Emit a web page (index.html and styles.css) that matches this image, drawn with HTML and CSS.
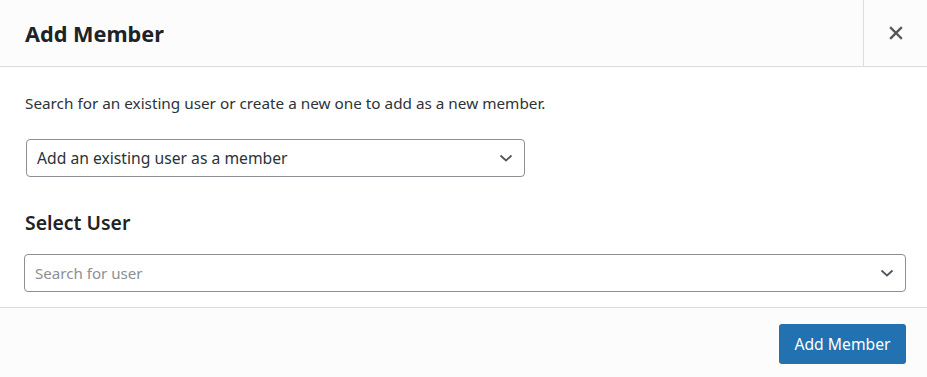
FILE: index.html
```html
<!DOCTYPE html>
<html lang="en">
  <head>
    <meta charset="UTF-8" />
    <meta name="viewport" content="width=device-width, initial-scale=1.0" />
    <title>Add Member</title>
    <link rel="stylesheet" href="styles.css">
  </head>
  <body>
    <div class="modal">
      <div class="modal-header">
        <h1>Add Member</h1>
        <button class="close-btn" type="button" aria-label="Close">
          <svg width="14" height="14" viewBox="0 0 14 14">
            <path d="M2 2L12 12M12 2L2 12" stroke="#50575e" stroke-width="2.4" stroke-linecap="square" />
          </svg>
        </button>
      </div>

      <div class="modal-body">
        <p class="intro">Search for an existing user or create a new one to add as a new member.</p>

        <div class="select-box mode-select">
          <span class="select-text">Add an existing user as a member</span>
          <svg class="chevron" width="14" height="8" viewBox="0 0 14 8">
            <path d="M1.5 1.5L7 6.5L12.5 1.5" fill="none" stroke="#50575e" stroke-width="1.8" />
          </svg>
        </div>

        <h2>Select User</h2>

        <div class="select-box user-select">
          <span class="placeholder">Search for user</span>
          <svg class="chevron" width="14" height="8" viewBox="0 0 14 8">
            <path d="M1.5 1.5L7 6.5L12.5 1.5" fill="none" stroke="#50575e" stroke-width="1.8" />
          </svg>
        </div>
      </div>

      <div class="modal-footer">
        <button class="btn" type="button">Add Member</button>
      </div>
    </div>
  </body>
</html>
```

FILE: styles.css
```css
* {
  margin: 0;
  padding: 0;
  box-sizing: border-box;
}

body {
  font-family: "Noto Sans", Arial, sans-serif;
  background-color: #ffffff;
  color: #1d2327;
}

.modal {
  width: 927px;
  height: 377px;
  display: flex;
  flex-direction: column;
}

.modal-header {
  height: 67px;
  flex-shrink: 0;
  background-color: #fcfcfc;
  border-bottom: 1px solid #dcdcde;
  display: flex;
  align-items: center;
  justify-content: space-between;
}

h1 {
  font-size: 21.7px;
  font-weight: 700;
  padding-left: 25px;
  color: #1d2327;
}

.close-btn {
  width: 64px;
  height: 100%;
  border: none;
  border-left: 1px solid #dcdcde;
  background: transparent;
  display: flex;
  align-items: center;
  justify-content: center;
}

.modal-body {
  padding: 26px 21px 15px 24px;
  flex: 1;
}

.intro {
  font-size: 15.3px;
  color: #2c3338;
  padding-left: 1px;
  line-height: 20px;
}

.select-box {
  height: 38px;
  border: 1px solid #8c8f94;
  border-radius: 4px;
  display: flex;
  align-items: center;
  justify-content: space-between;
  background: #ffffff;
}

.mode-select {
  width: 499px;
  margin-left: 2px;
  margin-top: 26px;
  padding: 0 11px 0 10px;
}

.select-text {
  font-size: 15.7px;
  color: #2c3338;
}

h2 {
  font-size: 19.4px;
  font-weight: 600;
  margin-top: 33px;
  line-height: 26px;
  padding-left: 1px;
}

.user-select {
  margin-top: 18px;
  padding: 0 11px 0 10px;
}

.placeholder {
  font-size: 15.1px;
  color: #8c8f94;
}

.modal-footer {
  height: 70px;
  flex-shrink: 0;
  background-color: #fcfcfc;
  border-top: 1px solid #dcdcde;
  display: flex;
  align-items: center;
  justify-content: flex-end;
  padding: 2px 21px 0 0;
}

.btn {
  background-color: #2271b1;
  color: #ffffff;
  font-family: "Noto Sans", Arial, sans-serif;
  font-size: 15.7px;
  height: 40px;
  width: 127px;
  border: none;
  border-radius: 3px;
}
```
